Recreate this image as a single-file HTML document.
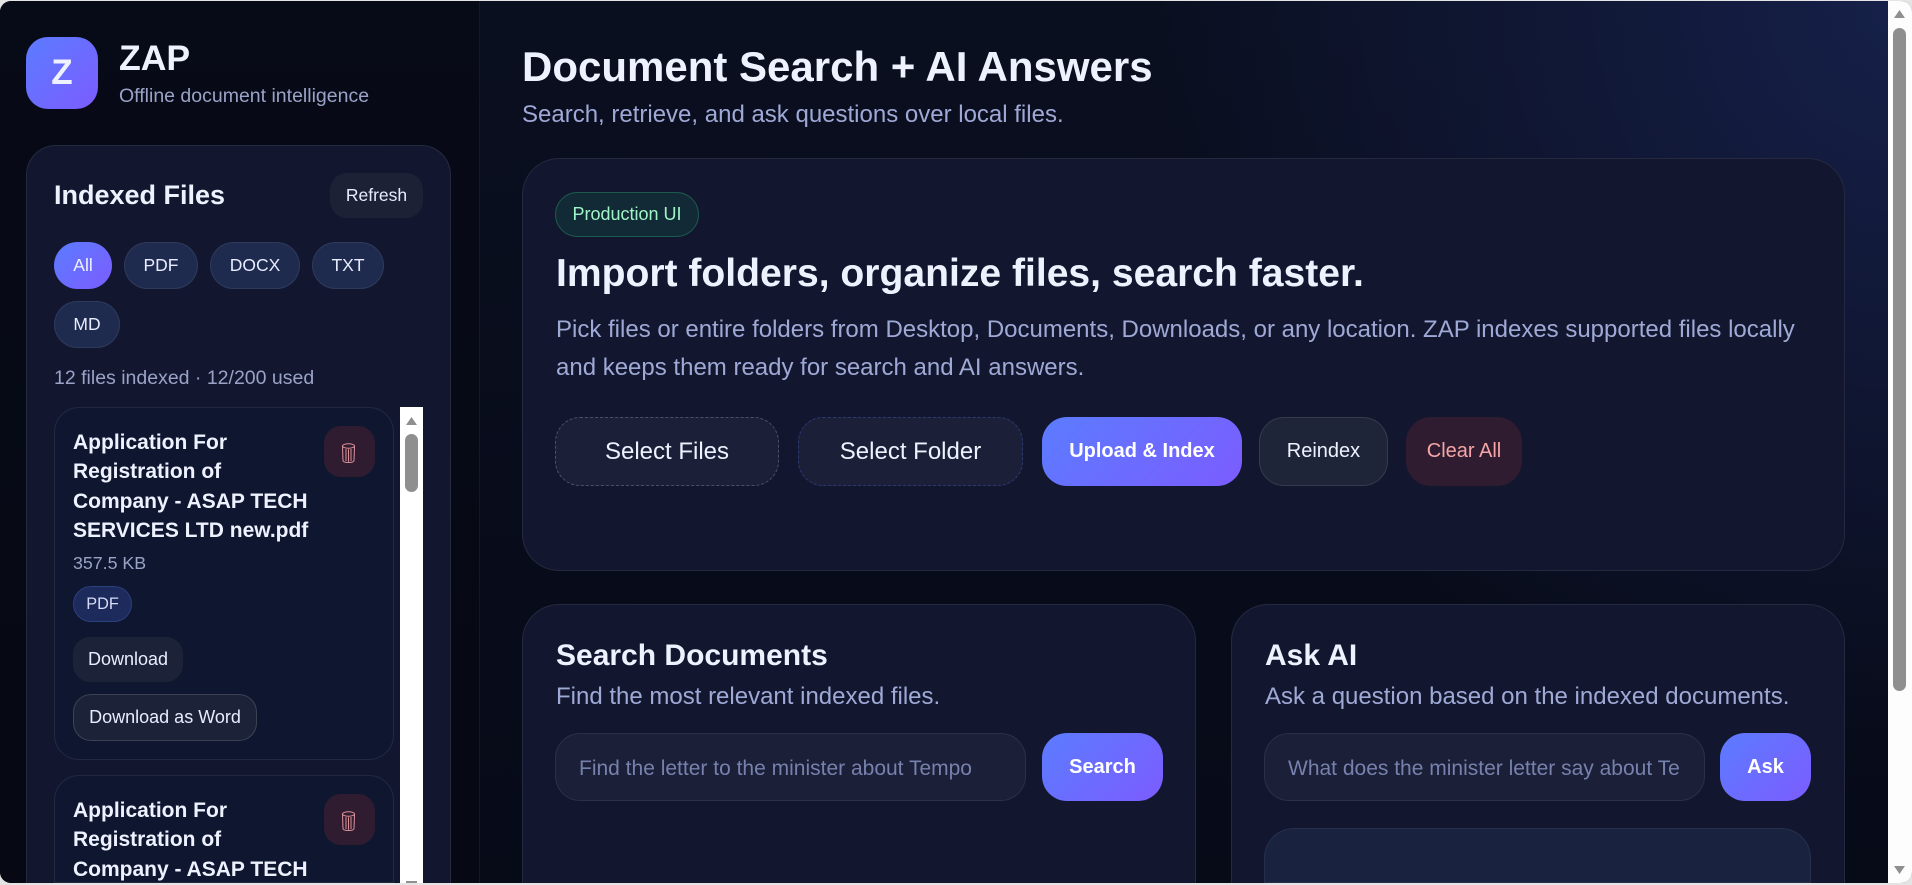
<!DOCTYPE html>
<html><head><meta charset="utf-8"><title>ZAP</title>
<style>
*{box-sizing:border-box;margin:0;padding:0}
html,body{width:1912px;height:885px;overflow:hidden;background:#e4e4e4;font-family:"Liberation Sans",Arial,sans-serif}
#f{position:absolute;left:0;top:1px;width:1912px;height:882px;border-radius:11px;overflow:hidden;background:
radial-gradient(circle at 100% 0,#16214a 0,#121a3b 12%,rgba(10,15,32,0) 36%),linear-gradient(180deg,#0a0f20,#070a17)}
#f>*{position:absolute}
.a{position:absolute}
.t{position:absolute;white-space:nowrap;line-height:40px}
.b{position:absolute;display:flex;align-items:center;justify-content:center;white-space:nowrap}
.g{background:linear-gradient(135deg,#5b7cff,#7c5cff);color:#fff}
.card{position:absolute;background:#12172f;border:1px solid rgba(255,255,255,.08)}
.open{border-bottom:0;border-bottom-left-radius:0!important;border-bottom-right-radius:0!important}
.pill{border-radius:24px;background:#1e2a4e;border:1px solid rgba(255,255,255,.08);color:#e8ecff;font-size:17.5px}
.file{position:absolute;background:#0f1730;border:1px solid rgba(255,255,255,.08);border-radius:25px;left:54px;width:340px}
.tt{position:absolute;left:73px;font-weight:700;font-size:21px;line-height:29.4px;color:#eef2ff;white-space:nowrap}
.del{position:absolute;left:324px;width:51px;height:51px;border-radius:17px;background:#2f1c30}
.mut{color:#9aa3c7}
.mu2{color:#9fa9d6}
</style></head><body>
<div id="f">
<div style="left:0;top:0;width:480px;height:882px;background:linear-gradient(180deg,#070a17,#060913);border-right:1px solid rgba(255,255,255,.06)"></div>

<div class="b g" style="left:26px;top:36px;width:72px;height:72px;border-radius:22px;font-weight:700;font-size:35px;color:#eef2ff">Z</div>
<div class="t" style="left:119px;top:37px;font-size:35.6px;font-weight:700;color:#eef2ff">ZAP</div>
<div class="t mut" style="left:119px;top:75px;font-size:19.5px">Offline document intelligence</div>

<div class="card open" style="left:26px;top:144px;width:425px;height:738px;border-radius:30px"></div>
<div class="t" style="left:54px;top:174px;font-size:27px;font-weight:700;color:#eef2ff">Indexed Files</div>
<div class="b" style="left:330px;top:172px;width:93px;height:45px;border-radius:17px;background:#1c2136;color:#e8ecff;font-size:17.5px">Refresh</div>

<div class="b g" style="left:54px;top:241px;width:58px;height:47px;border-radius:24px;font-size:17.5px;color:#eef2ff">All</div>
<div class="b pill" style="left:124px;top:241px;width:74px;height:47px">PDF</div>
<div class="b pill" style="left:210px;top:241px;width:90px;height:47px">DOCX</div>
<div class="b pill" style="left:312px;top:241px;width:72px;height:47px">TXT</div>
<div class="b pill" style="left:54px;top:300px;width:66px;height:47px">MD</div>
<div class="t mut" style="left:54px;top:357px;font-size:19.5px">12 files indexed · 12/200 used</div>

<div class="file" style="top:406px;height:353px"></div>
<div class="tt" style="top:427px">Application For<br>Registration of<br>Company - ASAP TECH<br>SERVICES LTD new.pdf</div>
<div class="del" style="top:425px"></div>
<svg class="a" style="left:341px;top:442px" width="15" height="21" viewBox="0 0 15 21" fill="none" stroke="#de929a" stroke-width="1"><ellipse cx="7.5" cy="3" rx="6" ry="2.2"/><path d="M1.5 3.5l.5 14c0 1.3 2.4 2 5.5 2s5.5-.7 5.5-2l.5-14M5 6v12M7.5 6.3v12.5M10 6v12"/></svg>
<div class="t mut" style="left:73px;top:542px;font-size:17.8px">357.5 KB</div>
<div class="b" style="left:73px;top:585px;width:59px;height:36px;border-radius:18px;background:#1c2a5c;border:1px solid #2c3f7f;color:#d6dcf5;font-size:16.3px">PDF</div>
<div class="b" style="left:73px;top:636px;width:110px;height:45px;border-radius:17px;background:#1c2338;color:#e8ecff;font-size:18px">Download</div>
<div class="b" style="left:73px;top:693px;width:184px;height:47px;border-radius:18px;background:#1c2338;border:1px solid rgba(255,255,255,.14);color:#e8ecff;font-size:18px">Download as Word</div>

<div class="file open" style="top:774px;height:108px"></div>
<div class="tt" style="top:795px;height:87px;overflow:hidden">Application For<br>Registration of<br>Company - ASAP TECH</div>
<div class="del" style="top:793px"></div>
<svg class="a" style="left:341px;top:810px" width="15" height="21" viewBox="0 0 15 21" fill="none" stroke="#de929a" stroke-width="1"><ellipse cx="7.5" cy="3" rx="6" ry="2.2"/><path d="M1.5 3.5l.5 14c0 1.3 2.4 2 5.5 2s5.5-.7 5.5-2l.5-14M5 6v12M7.5 6.3v12.5M10 6v12"/></svg>

<div class="a" style="left:400px;top:406px;width:23px;height:476px;background:#fff"></div>
<svg class="a" style="left:405px;top:415px" width="13" height="10" viewBox="0 0 13 10"><path d="M6.5 1L12 9H1z" fill="#8f8f8f"/></svg>
<div class="a" style="left:405px;top:433px;width:13px;height:58px;border-radius:7px;background:#8f8f8f"></div>
<div class="a" style="left:406px;top:880px;width:11px;height:2px;background:#8f8f8f"></div>

<div class="t" style="left:522px;top:46px;font-size:42px;font-weight:700;color:#eef2ff">Document Search + AI Answers</div>
<div class="t mu2" style="left:522px;top:94px;font-size:24px">Search, retrieve, and ask questions over local files.</div>

<div class="card" style="left:522px;top:157px;width:1323px;height:413px;border-radius:37px"></div>
<div class="b" style="left:555px;top:191px;width:144px;height:45px;border-radius:23px;background:#122a35;border:1px solid #1c5a4d;color:#9ff5c8;font-size:18px">Production UI</div>
<div class="t" style="left:556px;top:253px;font-size:39.1px;font-weight:700;color:#eef2ff">Import folders, organize files, search faster.</div>
<div class="a mu2" style="left:556px;top:310px;font-size:24px;line-height:38px;white-space:nowrap">Pick files or entire folders from Desktop, Documents, Downloads, or any location. ZAP indexes supported files locally<br>and keeps them ready for search and AI answers.</div>

<div class="b" style="left:555px;top:416px;width:224px;height:69px;border-radius:25px;background:#1b1f37;border:1px dashed rgba(255,255,255,.22);color:#eef2ff;font-size:24px">Select Files</div>
<div class="b" style="left:798px;top:416px;width:225px;height:69px;border-radius:25px;background:#1b1f37;border:1px dashed #2a3a70;color:#eef2ff;font-size:24px">Select Folder</div>
<div class="b g" style="left:1042px;top:416px;width:200px;height:69px;border-radius:25px;font-size:20px;font-weight:700">Upload &amp; Index</div>
<div class="b" style="left:1259px;top:416px;width:129px;height:69px;border-radius:25px;background:#1f2538;border:1px solid rgba(255,255,255,.1);color:#eef2ff;font-size:20px">Reindex</div>
<div class="b" style="left:1406px;top:416px;width:116px;height:69px;border-radius:25px;background:#2f1c30;color:#f5a5a5;font-size:20px">Clear All</div>

<div class="card open" style="left:522px;top:603px;width:674px;height:279px;border-radius:37px"></div>
<div class="t" style="left:556px;top:635px;font-size:30px;font-weight:700;color:#eef2ff">Search Documents</div>
<div class="t mu2" style="left:556px;top:676px;font-size:24px">Find the most relevant indexed files.</div>
<div class="a" style="left:555px;top:732px;width:471px;height:68px;border-radius:25px;background:#1b1f37;border:1px solid rgba(255,255,255,.08)"></div>
<div class="t" style="left:579px;top:748px;font-size:21px;color:#7681ad">Find the letter to the minister about Tempo</div>
<div class="b g" style="left:1042px;top:732px;width:121px;height:68px;border-radius:25px;font-size:20px;font-weight:700">Search</div>

<div class="card open" style="left:1231px;top:603px;width:614px;height:279px;border-radius:37px"></div>
<div class="t" style="left:1265px;top:635px;font-size:30px;font-weight:700;color:#eef2ff">Ask AI</div>
<div class="t mu2" style="left:1265px;top:676px;font-size:24px">Ask a question based on the indexed documents.</div>
<div class="a" style="left:1264px;top:732px;width:441px;height:68px;border-radius:25px;background:#1b1f37;border:1px solid rgba(255,255,255,.08)"></div>
<div class="a" style="left:1288px;top:748px;width:394px;height:40px;overflow:hidden"><div class="t" style="left:0;top:0;font-size:21px;color:#7681ad">What does the minister letter say about Te</div></div>
<div class="b g" style="left:1720px;top:732px;width:91px;height:68px;border-radius:25px;font-size:20px;font-weight:700">Ask</div>
<div class="a open" style="left:1264px;top:827px;width:547px;height:55px;border-radius:30px;background:#19233f;border:1px solid rgba(255,255,255,.06)"></div>

<div class="a" style="left:1888px;top:0;width:24px;height:882px;background:#fdfdfd"></div>
<svg class="a" style="left:1893px;top:8px" width="13" height="10" viewBox="0 0 13 10"><path d="M6.5 1L12 9H1z" fill="#8f8f8f"/></svg>
<div class="a" style="left:1893px;top:27px;width:13px;height:663px;border-radius:7px;background:#8f8f8f"></div>
<svg class="a" style="left:1893px;top:864px" width="13" height="10" viewBox="0 0 13 10"><path d="M6.5 9L12 1H1z" fill="#8f8f8f"/></svg>
</div>
</body></html>
